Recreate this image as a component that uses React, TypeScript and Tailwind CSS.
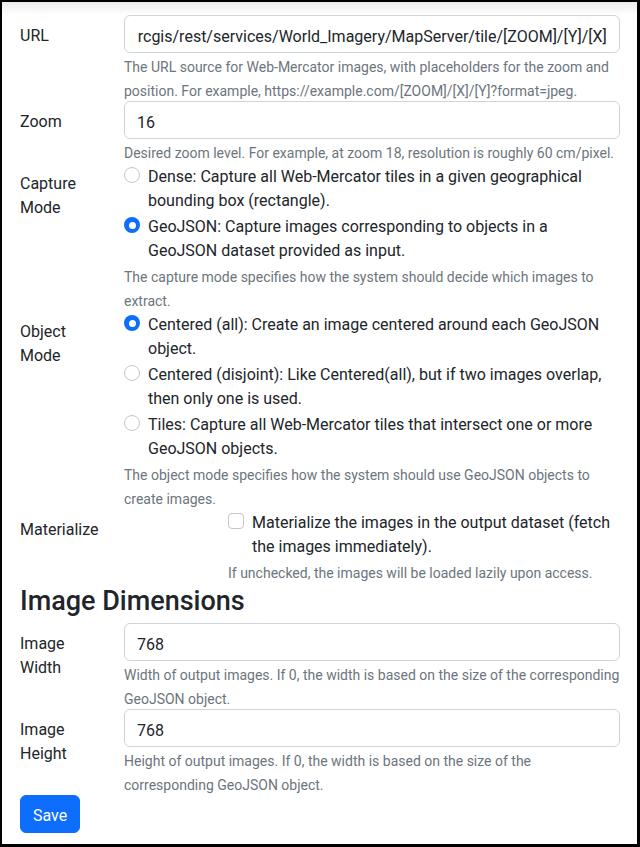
import { useEffect, useRef, type ReactNode } from 'react';

const Help = ({ children }: { children: ReactNode }) => (
	<div className="pt-[2px] -mb-[2px] text-[14px] leading-6 text-[#6c757d]">{children}</div>
);

const Row = ({ label, children }: { label: ReactNode; children: ReactNode }) => (
	<div className="flex">
		<label className="w-[104px] shrink-0 pr-6 pt-[9px] pb-[5px] leading-6">{label}</label>
		<div className="flex-1 min-w-0">{children}</div>
	</div>
);

const TextInput = ({ value, scrollEnd = false }: { value: string; scrollEnd?: boolean }) => {
	const ref = useRef<HTMLInputElement>(null);

	useEffect(() => {
		if (scrollEnd && ref.current) ref.current.scrollLeft = ref.current.scrollWidth;
	}, [scrollEnd]);

	return (
		<input
			ref={ref}
			type="text"
			defaultValue={value}
			className="block w-full h-[38px] px-3 pt-[8px] pb-[4px] leading-6 text-[16px] text-[#212529] bg-white border border-[#ced4da] rounded-[6px] outline-none"
		/>
	);
};

const Check = ({ box, children }: { box: ReactNode; children: ReactNode }) => (
	<div className="flex mb-[2px] leading-6">
		{box}
		<span className="pt-[2px] -mb-[2px]">{children}</span>
	</div>
);

const Radio = ({ checked = false, children }: { checked?: boolean; children: ReactNode }) => (
	<Check
		box={
			<span
				className={
					checked
						? 'mt-1 mr-2 w-4 h-4 shrink-0 rounded-full bg-[#0d6efd] flex items-center justify-center'
						: 'mt-1 mr-2 w-4 h-4 shrink-0 rounded-full border border-[#c6c6c6] bg-white'
				}
			>
				{checked && <span className="w-[7px] h-[7px] rounded-full bg-white" />}
			</span>
		}
	>
		{children}
	</Check>
);

export default function App() {
	return (
		<div className="w-[640px] h-[847px] box-border border-black border-l-2 border-t-2 border-r-[3px] border-b-[3px] bg-white text-[16px] text-[#212529] font-['Roboto',sans-serif] overflow-hidden">
			<div className="h-[13px] bg-gradient-to-b from-[#ececec] to-white" />
			<div className="pl-[18px] pr-[17px]">
				<Row label="URL">
					<TextInput
						scrollEnd
						value="https://services.arcgisonline.com/arcgis/rest/services/World_Imagery/MapServer/tile/[ZOOM]/[Y]/[X]"
					/>
					<Help>
						The URL source for Web-Mercator images, with placeholders for the zoom and position. For example,
						https://example.com/[ZOOM]/[X]/[Y]?format=jpeg.
					</Help>
				</Row>

				<Row label="Zoom">
					<TextInput value="16" />
					<Help>Desired zoom level. For example, at zoom 18, resolution is roughly 60 cm/pixel.</Help>
				</Row>

				<Row label="Capture Mode">
					<Radio>Dense: Capture all Web-Mercator tiles in a given geographical bounding box (rectangle).</Radio>
					<Radio checked>
						GeoJSON: Capture images corresponding to objects in a GeoJSON dataset provided as input.
					</Radio>
					<Help>The capture mode specifies how the system should decide which images to extract.</Help>
				</Row>

				<Row label="Object Mode">
					<Radio checked>Centered (all): Create an image centered around each GeoJSON object.</Radio>
					<Radio>Centered (disjoint): Like Centered(all), but if two images overlap, then only one is used.</Radio>
					<Radio>Tiles: Capture all Web-Mercator tiles that intersect one or more GeoJSON objects.</Radio>
					<Help>The object mode specifies how the system should use GeoJSON objects to create images.</Help>
				</Row>

				<Row label="Materialize">
					<div className="ml-[104px]">
						<Check box={<span className="mt-1 mr-2 w-4 h-4 shrink-0 rounded-[4px] border border-[#c6c6c6] bg-white" />}>
							Materialize the images in the output dataset (fetch the images immediately).
						</Check>
						<Help>If unchecked, the images will be loaded lazily upon access.</Help>
					</div>
				</Row>

				<h2 className="pt-[2px] text-[27px] leading-[1.2] font-medium mb-[6px]">Image Dimensions</h2>

				<Row label="Image Width">
					<TextInput value="768" />
					<Help>
						Width of output images. If 0, the width is based on the size of the corresponding GeoJSON object.
					</Help>
				</Row>

				<Row label="Image Height">
					<TextInput value="768" />
					<Help>
						Height of output images. If 0, the width is based on the size of the corresponding GeoJSON object.
					</Help>
				</Row>

				<button className="px-3 pt-[8px] pb-[4px] leading-6 text-white bg-[#0d6efd] border border-[#0d6efd] rounded-[6px]">
					Save
				</button>
			</div>
		</div>
	);
}
